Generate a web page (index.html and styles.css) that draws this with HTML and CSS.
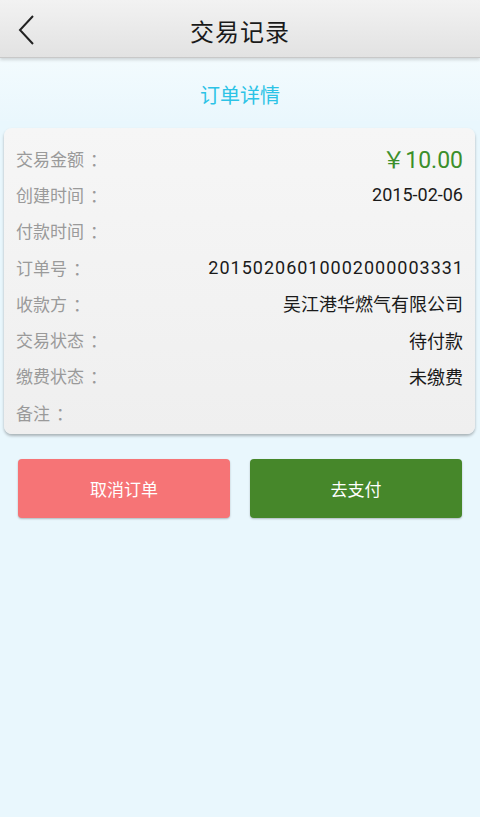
FILE: index.html
```html
<!DOCTYPE html>
<html lang="zh-CN">
<head>
    <meta charset="UTF-8">
    <meta name="viewport" content="width=device-width, initial-scale=1.0">
    <title>交易记录</title>
    <link rel="stylesheet" href="styles.css">
</head>
<body>
    <div class="header">
        <a class="back" href="#">
            <svg width="20" height="32" viewBox="0 0 20 32"><polyline points="15,2 2,16 15,30" fill="none" stroke="#222" stroke-width="2"/></svg>
        </a>
        <h1>交易记录</h1>
    </div>

    <div class="subtitle">订单详情</div>

    <div class="card">
        <div class="row"><span class="label">交易金额<span class="colon">：</span></span><span class="value amount">￥10.00</span></div>
        <div class="row"><span class="label">创建时间<span class="colon">：</span></span><span class="value">2015-02-06</span></div>
        <div class="row"><span class="label">付款时间<span class="colon">：</span></span><span class="value"></span></div>
        <div class="row"><span class="label">订单号<span class="colon">：</span></span><span class="value order-no">20150206010002000003331</span></div>
        <div class="row"><span class="label">收款方<span class="colon">：</span></span><span class="value">吴江港华燃气有限公司</span></div>
        <div class="row"><span class="label">交易状态<span class="colon">：</span></span><span class="value">待付款</span></div>
        <div class="row"><span class="label">缴费状态<span class="colon">：</span></span><span class="value">未缴费</span></div>
        <div class="row"><span class="label">备注<span class="colon">：</span></span><span class="value"></span></div>
    </div>

    <div class="buttons">
        <button class="cancel">取消订单</button>
        <button class="pay">去支付</button>
    </div>
</body>
</html>
```

FILE: styles.css
```css
* { margin: 0; padding: 0; box-sizing: border-box; }
body { min-height: 100vh; background: #e9f7fd; font-family: Roboto, "Noto Sans CJK SC", sans-serif; color: #222; }
.header { position: relative; height: 58px; padding-top: 4px; display: flex; justify-content: center; align-items: center; background: linear-gradient(#f2f2f2, #e2e2e2); border-bottom: 1px solid #c8c8c8; box-shadow: 0 2px 3px rgba(0,0,0,0.15); }
.header h1 { font-size: 24px; font-weight: normal; color: #1a1a1a; letter-spacing: 1px; }
.back { position: absolute; left: 18px; top: 14px; display: block; height: 32px; }
.subtitle { text-align: center; color: #2cc3e6; font-size: 20px; padding: 22px 0 12px; background: linear-gradient(#f3fbfe, #eaf7fd); }
.card { margin: 7px 5px 0 4px; background: linear-gradient(#f6f6f6, #efefef); border-radius: 8px; padding: 12px 12px 4px 12px; box-shadow: 0 2px 3px rgba(0,0,0,0.28); }
.row { display: flex; justify-content: space-between; align-items: center; height: 36.3px; }
.label { color: #9a9a9a; font-size: 17px; }
.colon { margin-left: 6px; }
.value { color: #1a1a1a; font-size: 18px; }
.order-no { letter-spacing: 1px; margin-right: -1px; }
.amount { color: #3c8f2b; font-size: 23px; }
.buttons { display: flex; justify-content: space-between; padding: 25px 18px 0 18px; }
.buttons button { width: 212px; height: 59px; border: none; border-radius: 4px; color: white; font-size: 17px; font-family: Roboto, "Noto Sans CJK SC", sans-serif; box-shadow: 0 1px 2px rgba(0,0,0,0.25); cursor: pointer; }
.cancel { background: #f67476; }
.pay { background: #46872a; }
```
